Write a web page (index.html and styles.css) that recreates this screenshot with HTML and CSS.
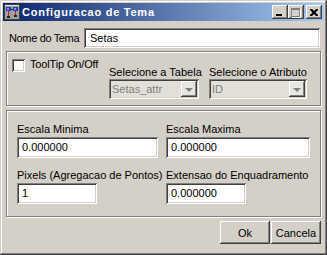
FILE: index.html
```html
<!DOCTYPE html>
<html lang="pt">
<head>
    <meta charset="UTF-8">
    <title>Configuracao de Tema</title>
    <link rel="stylesheet" href="styles.css">
</head>
<body>
    <div class="window">
        <div class="titlebar">
            <svg class="app-icon" width="16" height="16" viewBox="0 0 16 16">
                <rect x="0.5" y="0.5" width="15" height="15" fill="#a0a0a0" stroke="#404040"/>
                <rect x="1" y="1" width="14" height="1" fill="#e0e0e0"/>
                <rect x="2" y="3" width="5" height="4" fill="#2040c0"/>
                <rect x="9" y="3" width="5" height="4" fill="#2040c0"/>
                <rect x="3" y="4" width="2" height="2" fill="#8090ff"/>
                <rect x="10" y="4" width="2" height="2" fill="#8090ff"/>
                <rect x="4" y="7" width="1" height="6" fill="#c02020"/>
                <rect x="11" y="7" width="1" height="5" fill="#c02020"/>
                <rect x="7" y="5" width="2" height="1" fill="#202020"/>
                <rect x="3" y="12" width="3" height="2" fill="#202020"/>
                <rect x="10" y="11" width="3" height="2" fill="#202020"/>
            </svg>
            <span class="title">Configuracao de Tema</span>
            <div class="controls">
                <span class="ctl ctl-min"><i></i></span>
                <span class="ctl ctl-max"><i></i></span>
                <span class="ctl ctl-close">
                    <svg width="8" height="7" viewBox="0 0 8 7">
                        <path d="M0 0h2l2 2 2-2h2v1l-2.5 2.5 2.5 2.5v1h-2l-2-2-2 2h-2v-1l2.5-2.5-2.5-2.5z" fill="#000"/>
                    </svg>
                </span>
            </div>
        </div>

        <div class="name-row">
            <span class="label">Nome do Tema</span>
            <div class="edit name-edit">Setas</div>
        </div>

        <div class="group group-top">
            <div class="check-wrap">
                <span class="checkbox"></span>
                <span class="label">ToolTip On/Off</span>
            </div>
            <div class="combo-field combo-tabela">
                <span class="label">Selecione a Tabela</span>
                <div class="combo">
                    <span class="combo-text">Setas_attr</span>
                    <span class="combo-btn"><i></i></span>
                </div>
            </div>
            <div class="combo-field combo-atributo">
                <span class="label">Selecione o Atributo</span>
                <div class="combo">
                    <span class="combo-text">ID</span>
                    <span class="combo-btn"><i></i></span>
                </div>
            </div>
        </div>

        <div class="group group-scale">
            <div class="field">
                <span class="label">Escala Minima</span>
                <div class="edit w-min">0.000000</div>
            </div>
            <div class="field">
                <span class="label">Escala Maxima</span>
                <div class="edit w-max">0.000000</div>
            </div>
            <div class="field">
                <span class="label">Pixels (Agregacao de Pontos)</span>
                <div class="edit w-small">1</div>
            </div>
            <div class="field">
                <span class="label">Extensao do Enquadramento</span>
                <div class="edit w-small">0.000000</div>
            </div>
        </div>

        <div class="button-row">
            <button class="btn">Ok</button>
            <button class="btn">Cancela</button>
        </div>
    </div>
</body>
</html>
```

FILE: styles.css
```css
body {
    margin: 0;
    background: #d4d0c8;
}

.window {
    width: 327px;
    height: 255px;
    box-sizing: border-box;
    padding: 3px;
    background: #d4d0c8;
    box-shadow: inset -1px -1px 0 #404040, inset 1px 1px 0 #d4d0c8,
                inset -2px -2px 0 #808080, inset 2px 2px 0 #fff;
    font-family: "Liberation Sans", Arial, sans-serif;
    font-size: 11px;
    color: #000;
}

.titlebar {
    height: 18px;
    display: flex;
    align-items: center;
    padding: 0 2px 0 1px;
    background: linear-gradient(to right, #0a246a, #a6caf0);
}

.app-icon {
    flex: none;
}

.title {
    margin-left: 2px;
    color: #fff;
    font-weight: bold;
    letter-spacing: 0.75px;
}

.controls {
    margin-left: auto;
    display: flex;
}

.ctl {
    width: 16px;
    height: 14px;
    box-sizing: border-box;
    background: #d4d0c8;
    box-shadow: inset -1px -1px 0 #404040, inset 1px 1px 0 #fff,
                inset -2px -2px 0 #808080;
    display: flex;
    align-items: center;
    justify-content: center;
}

.ctl-min i {
    width: 6px;
    height: 2px;
    background: #000;
    margin-top: 6px;
    margin-right: 2px;
}

.ctl-max i {
    width: 7px;
    height: 6px;
    border: 1px solid #808080;
    border-top-width: 2px;
    box-shadow: 1px 1px 0 #fff;
    margin-right: 1px;
}

.ctl-close {
    margin-left: 2px;
}

.ctl-close svg {
    margin-right: 1px;
}

.label {
    line-height: 14px;
    white-space: nowrap;
}

.edit {
    height: 21px;
    box-sizing: border-box;
    padding: 0 4px 0 5px;
    background: #fff;
    line-height: 21px;
    box-shadow: inset 1px 1px 0 #808080, inset -1px -1px 0 #fff,
                inset 2px 2px 0 #404040, inset -2px -2px 0 #d4d0c8;
}

.name-row {
    display: flex;
    align-items: center;
    margin-top: 7px;
    padding: 0 4px 0 6px;
}

.name-row .label {
    letter-spacing: -0.35px;
}

.name-edit {
    width: 236px;
    height: 20px;
    line-height: 20px;
    margin-left: auto;
    padding-left: 6px;
}

.group {
    margin: 3px 0 0 3px;
    width: 315px;
    box-sizing: border-box;
    border: 1px solid #808080;
    box-shadow: inset 1px 1px 0 #fff, 1px 1px 0 #fff;
}

.group-top {
    height: 55px;
    display: flex;
    padding: 7px 0 0 5px;
}

.check-wrap {
    width: 97px;
    display: flex;
    align-items: flex-start;
    gap: 5px;
}

.checkbox {
    width: 13px;
    height: 13px;
    box-sizing: border-box;
    background: #fff;
    box-shadow: inset 1px 1px 0 #808080, inset -1px -1px 0 #fff,
                inset 2px 2px 0 #404040, inset -2px -2px 0 #d4d0c8;
}

.check-wrap .label {
    margin-top: -2px;
    letter-spacing: -0.15px;
}

.combo-field {
    display: flex;
    flex-direction: column;
    padding-top: 6px;
}

.combo-tabela {
    width: 100px;
}

.combo-tabela .combo {
    width: 90px;
}

.combo-atributo .combo {
    width: 98px;
}

.combo {
    height: 20px;
    box-sizing: border-box;
    display: flex;
    align-items: center;
    padding: 2px;
    background: #e2dfd9;
    box-shadow: inset 1px 1px 0 #808080, inset -1px -1px 0 #fff,
                inset 2px 2px 0 #404040, inset -2px -2px 0 #d4d0c8;
}

.combo-text {
    flex: 1;
    padding-left: 1px;
    color: #808080;
}

.combo-btn {
    width: 16px;
    height: 16px;
    box-sizing: border-box;
    background: #e8e6e2;
    box-shadow: inset -1px -1px 0 #404040, inset 1px 1px 0 #fff,
                inset -2px -2px 0 #808080;
    display: flex;
    align-items: center;
    justify-content: center;
}

.combo-btn i {
    width: 0;
    height: 0;
    border-left: 4px solid transparent;
    border-right: 4px solid transparent;
    border-top: 4px solid #808080;
    margin: 1px 1px 0 0;
}

.group-scale {
    margin-top: 4px;
    height: 107px;
    display: grid;
    grid-template-columns: 149px 1fr;
    row-gap: 10px;
    padding: 11px 0 0 10px;
    align-content: start;
}

.field {
    display: flex;
    flex-direction: column;
    align-items: flex-start;
}

.field .label {
    margin-bottom: 1px;
}

.w-min {
    width: 141px;
}

.w-max {
    width: 144px;
}

.w-small {
    width: 80px;
}

.button-row {
    display: flex;
    justify-content: flex-end;
    gap: 1px;
    margin-top: 4px;
    padding-right: 3px;
}

.btn {
    width: 50px;
    height: 23px;
    padding: 0;
    border: none;
    background: #d4d0c8;
    font-family: "Liberation Sans", Arial, sans-serif;
    font-size: 11px;
    color: #000;
    box-shadow: inset -1px -1px 0 #404040, inset 1px 1px 0 #fff,
                inset -2px -2px 0 #808080;
}
```
